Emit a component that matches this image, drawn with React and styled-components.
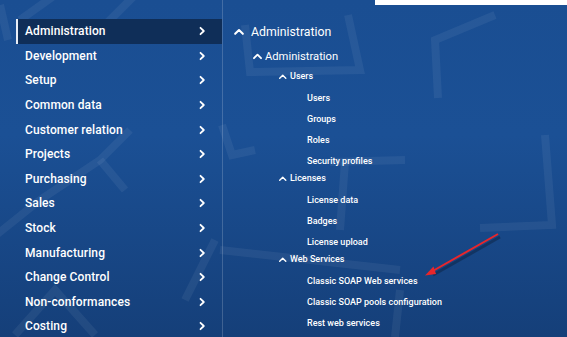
import React from "react";
import styled, { createGlobalStyle } from "styled-components";

const Global = createGlobalStyle`
  html, body { margin: 0; padding: 0; }
  body { font-family: Roboto, "Noto Sans", "Liberation Sans", sans-serif; }
  * { box-sizing: border-box; }
`;

const Page = styled.div`
  position: relative;
  width: 567px;
  height: 337px;
  overflow: hidden;
  background: linear-gradient(180deg, #1a4e92 0%, #1b5095 40%, #153f79 100%);
  display: flex;
  padding-top: 19px;
  color: #fff;
`;

const Deco = styled.svg`
  position: absolute;
  left: 0;
  top: 0;
  pointer-events: none;
`;

const SearchBox = styled.div`
  position: absolute;
  top: 0;
  left: 375px;
  right: 0;
  height: 5px;
  background: #ffffff;
`;

const Sidebar = styled.nav`
  position: relative;
  width: 206px;
  margin-left: 16px;
  display: flex;
  flex-direction: column;
  align-self: stretch;
`;

const SideItem = styled.div`
  display: flex;
  align-items: center;
  justify-content: space-between;
  height: 24.6px;
  flex: none;
  padding: 0 15px 0 7px;
  font-size: 12px;
  font-weight: 500;
  letter-spacing: 0.1px;
  background: ${(p) => (p.$active ? "#0f2e58" : "transparent")};
  border-left: 2px solid ${(p) => (p.$active ? "#e8eef7" : "transparent")};
`;

const Separator = styled.div`
  width: 1px;
  align-self: stretch;
  margin-top: -19px;
  background: rgba(255, 255, 255, 0.18);
`;

const Content = styled.div`
  display: flex;
  flex-direction: column;
  padding-left: 10px;
`;

const Row = styled.div`
  display: flex;
  align-items: ${(p) => (p.$top ? "flex-start" : "center")};
  height: ${(p) => p.$h}px;
  line-height: ${(p) => (p.$top ? "15px" : "normal")};
  padding-left: ${(p) => p.$indent}px;
  font-size: ${(p) => p.$size}px;
  font-weight: ${(p) => p.$weight || 400};
  gap: ${(p) => p.$gap || 4}px;
  white-space: nowrap;
  & > svg { align-self: center; }
  ${(p) => (p.$top ? "& > svg { align-self: flex-start; margin-top: 3px; }" : "")}
`;

const Chev = ({ dir, size = 10, stroke = 2 }) => (
  <svg width={size} height={size} viewBox="0 0 10 10" style={{ flex: "none" }}>
    {dir === "right" ? (
      <path d="M3.5 1.8 L6.8 5 L3.5 8.2" fill="none" stroke="#fff" strokeWidth={stroke} strokeLinecap="round" strokeLinejoin="round" />
    ) : (
      <path d="M1.8 6.5 L5 3.3 L8.2 6.5" fill="none" stroke="#fff" strokeWidth={stroke} strokeLinecap="round" strokeLinejoin="round" />
    )}
  </svg>
);

const Arrow = styled.svg`
  position: absolute;
  left: 0;
  top: 0;
  pointer-events: none;
`;

const menu = [
  "Administration",
  "Development",
  "Setup",
  "Common data",
  "Customer relation",
  "Projects",
  "Purchasing",
  "Sales",
  "Stock",
  "Manufacturing",
  "Change Control",
  "Non-conformances",
  "Costing",
];

const tree = [
  { t: "Administration", lvl: 0, h: 25 },
  { t: "Administration", lvl: 1, h: 25 },
  { t: "Users", lvl: 2, h: 18 },
  { t: "Users", lvl: 3, h: 21 },
  { t: "Groups", lvl: 3, h: 21 },
  { t: "Roles", lvl: 3, h: 21 },
  { t: "Security profiles", lvl: 3, h: 21 },
  { t: "Licenses", lvl: 2, h: 18 },
  { t: "License data", lvl: 3, h: 21 },
  { t: "Badges", lvl: 3, h: 21 },
  { t: "License upload", lvl: 3, h: 21 },
  { t: "Web Services", lvl: 2, h: 18 },
  { t: "Classic SOAP Web services", lvl: 3, h: 21 },
  { t: "Classic SOAP pools configuration", lvl: 3, h: 21 },
  { t: "Rest web services", lvl: 3, h: 21 },
];

const lvlStyle = {
  0: { indent: 0, size: 12.3, weight: 400, chev: 12, gap: 6, stroke: 1.7 },
  1: { indent: 19, size: 11.2, weight: 400, chev: 11, gap: 2, stroke: 1.7 },
  2: { indent: 45, size: 9, weight: 500, chev: 9.5, gap: 2.5, stroke: 1.5, top: true },
  3: { indent: 74, size: 9, weight: 500 },
};

export default function App() {
  return (
    <>
      <Global />
      <Page>
        <Deco width="567" height="337" viewBox="0 0 567 337">
          <g fill="none" stroke="rgba(255,255,255,0.06)" strokeWidth="8" strokeLinecap="butt">
            <path d="M0 5 L8 40" />
            <path d="M20 20 L55 -5" />
            <path d="M100 30 L135 -5" />
            <path d="M130 130 L100 160 L40 200 L-10 240" />
            <path d="M100 160 L125 190" />
            <path d="M15 335 L55 290 L95 335" />
            <path d="M185 300 L215 240" />
            <path d="M245 25 L250 72 L360 70 L348 15" />
            <path d="M438 98 L435 40 L495 15" />
            <path d="M330 162 L405 160" />
            <path d="M345 162 L340 230" />
            <path d="M222 125 L232 155 L255 150" />
            <path d="M545 135 L552 225 L480 228" />
            <path d="M220 250 L400 270" />
            <path d="M400 290 L395 337" />
          </g>
        </Deco>
        <SearchBox />
        <Sidebar>
          {menu.map((m, i) => (
            <SideItem key={m} $active={i === 0}>
              <span>{m}</span>
              <Chev dir="right" size={10} stroke={1.8} />
            </SideItem>
          ))}
        </Sidebar>
        <Separator />
        <Content>
          {tree.map((n, i) => {
            const s = lvlStyle[n.lvl];
            return (
              <Row key={i} $h={n.h} $indent={s.indent} $size={s.size} $weight={s.weight} $gap={s.gap} $top={s.top}>
                {n.lvl < 3 && <Chev dir="up" size={s.chev} stroke={s.stroke} />}
                <span>{n.t}</span>
              </Row>
            );
          })}
        </Content>
        <Arrow width="567" height="337" viewBox="0 0 567 337">
          <line x1="499" y1="235" x2="432" y2="273" stroke="rgba(0,0,0,0.25)" strokeWidth="3" transform="translate(1,2)" />
          <line x1="498" y1="234" x2="431" y2="272" stroke="#e8262b" strokeWidth="2" />
          <path d="M425 275.5 L433.5 266.5 L436 274 Z" fill="#e8262b" />
        </Arrow>
      </Page>
    </>
  );
}
